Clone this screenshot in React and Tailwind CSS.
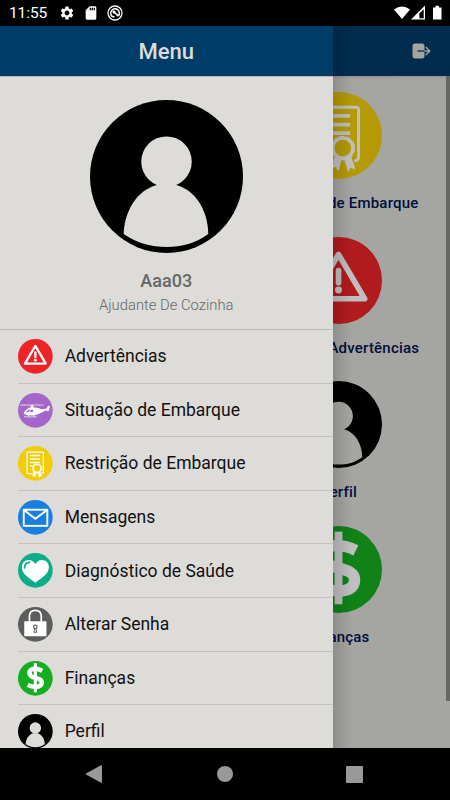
import { MdSettings, MdSdCard } from "react-icons/md";

function PersonIcon({ className }) {
  return (
    <svg viewBox="0 0 100 100" className={className}>
      <circle cx="50" cy="50" r="50" fill="#000" />
      <circle cx="50" cy="40.3" r="16.5" fill="#dddcd8" />
      <path d="M43.5 55.5H56.5C69 59 77 72 77.3 87.5C69 93.500 60 96 50 96S31 93.500 22 87.500C22.500 72 31 59 43.500 55.500Z" fill="#dddcd8" />
    </svg>
  );
}

function WarningIcon({ className }) {
  return (
    <svg viewBox="0 0 100 100" className={className}>
      <circle cx="50" cy="50" r="50" fill="#ec2427" />
      <path d="M50 20L80 71H20Z" fill="none" stroke="#fff" strokeWidth="6.500" strokeLinejoin="round" />
      <path d="M50 38.500V52.500" stroke="#fff" strokeWidth="6.500" strokeLinecap="round" />
      <circle cx="50" cy="61" r="4" fill="#fff" />
    </svg>
  );
}

function HelicopterIcon({ className }) {
  return (
    <svg viewBox="0 0 100 100" className={className}>
      <circle cx="50" cy="50" r="50" fill="#a566c9" />
      <path d="M6 34.800H74" stroke="#fff" strokeWidth="2" />
      <path d="M37 35H44V41L58 43L68 47L82 45L87 37H92L90 50L86 53L82 50L62 59C54 63 46 65 36 65C26 65 18 62 16 58C18 53 25 46 33 42L37 41Z" fill="#fff" />
      <path d="M23 55L31 47L34 48L31 55ZM36 48H43V55H34Z" fill="#a566c9" />
      <path d="M30 63V69M47 63V69M17 66L20 69H54" fill="none" stroke="#fff" strokeWidth="2" />
    </svg>
  );
}

function CertificateIcon({ className }) {
  return (
    <svg viewBox="0 0 100 100" className={className}>
      <circle cx="50" cy="50" r="50" fill="#f2cd07" />
      <path d="M41 79.500H29Q26 79.500 26 76.500V20.500Q26 17.500 29 17.500H70Q73 17.500 73 20.500V75Q73 78 69.500 79" fill="none" stroke="#fff" strokeWidth="3.400" strokeLinecap="round" />
      <path d="M34 27.500H63.500M34 37.500H63.500M34 47.300H63.500M34 57H41" stroke="#fff" strokeWidth="4.300" />
      <path d="M46 72L41 89L46.500 86L50 91L54 76ZM56 76L61 92L64 87L69.500 89L64 72Z" fill="#fff" />
      <circle cx="55" cy="64.500" r="11.500" fill="#f2cd07" stroke="#fff" strokeWidth="3.800" />
      <circle cx="55" cy="64.500" r="13.200" fill="none" stroke="#fff" strokeWidth="1.800" strokeDasharray="5 3.290" strokeLinecap="round" />
    </svg>
  );
}

function MailIcon({ className }) {
  return (
    <svg viewBox="0 0 100 100" className={className}>
      <circle cx="50" cy="50" r="50" fill="#187fe0" />
      <rect x="16.500" y="28" width="68" height="46.500" fill="none" stroke="#fff" strokeWidth="5.500" />
      <path d="M17 29L50 54L84 29" fill="none" stroke="#fff" strokeWidth="5.500" />
    </svg>
  );
}

function HeartIcon({ className }) {
  return (
    <svg viewBox="0 0 100 100" className={className}>
      <circle cx="50" cy="50" r="50" fill="#0cae87" />
      <path d="M50 86C40 76 11 63 11 41C11 28 20 20 31 20C40 20 46 25 50 32C54 25 60 20 69 20C80 20 89 28 89 41C89 63 60 76 50 86Z" fill="#fff" />
      <path d="M19 43C19 33 25 27 34 27" fill="none" stroke="#0cae87" strokeWidth="5" strokeLinecap="round" />
    </svg>
  );
}

function LockIcon({ className }) {
  return (
    <svg viewBox="0 0 100 100" className={className}>
      <circle cx="50" cy="50" r="50" fill="#5d5d5d" />
      <path d="M33 43V27C33 16 40 10 50 10S67 16 67 27V43" fill="none" stroke="#fff" strokeWidth="5" />
      <rect x="18" y="41" width="64" height="43" rx="2" fill="#fff" />
      <path d="M48 62L46 73H54L52 62Z" fill="none" stroke="#444" strokeWidth="2.500" />
      <circle cx="50" cy="57" r="5" fill="#fff" stroke="#444" strokeWidth="3" />
    </svg>
  );
}

function MoneyIcon({ className }) {
  return (
    <svg viewBox="0 0 100 100" className={className}>
      <circle cx="50" cy="50" r="50" fill="#16ae21" />
      <path d="M50 6.500V90" stroke="#fff" strokeWidth="9" />
      <path d="M70 28C62 24 56 22.500 48 22.500C37 22.500 33 29 33 35C33 43 41 46 50 48.500C60 51 68.500 53 68.500 62C68.500 71 61 74.500 50 74.500C42 74.500 35 72.500 28 69" fill="none" stroke="#fff" strokeWidth="13" />
    </svg>
  );
}

const menuItems = [
  { label: "Advertências", Icon: WarningIcon },
  { label: "Situação de Embarque", Icon: HelicopterIcon },
  { label: "Restrição de Embarque", Icon: CertificateIcon },
  { label: "Mensagens", Icon: MailIcon },
  { label: "Diagnóstico de Saúde", Icon: HeartIcon },
  { label: "Alterar Senha", Icon: LockIcon },
  { label: "Finanças", Icon: MoneyIcon },
  { label: "Perfil", Icon: PersonIcon },
];

const tiles = [
  { label: "Restrição de Embarque", Icon: CertificateIcon },
  { label: "Consultar Advertências", Icon: WarningIcon },
  { label: "Perfil", Icon: PersonIcon },
  { label: "Finanças", Icon: MoneyIcon },
];

function StatusBar() {
  return (
    <div className="flex h-[26px] shrink-0 items-center bg-black pl-[9px] pr-[7px] text-white">
      <span className="w-[50px] pt-0.5 text-[15.500px] leading-none tracking-[-0.1px]">11:55</span>
      <MdSettings className="size-4" />
      <MdSdCard className="ml-2 size-4" />
      <svg viewBox="0 0 16 16" className="ml-2 size-4" fill="none" stroke="currentColor">
        <circle cx="8" cy="8" r="7" strokeWidth="1.300" />
        <path d="M11.500 10.800A4.300 4.300 0 1 0 5 11.200L7.500 12M6.200 6.200L11.500 11.200" strokeWidth="1.600" />
        <circle cx="7" cy="7" r="1.500" fill="currentColor" stroke="none" />
      </svg>
      <svg viewBox="0 0 50 16" className="ml-auto h-4 w-[50px]" fill="currentColor">
        <path d="M1 4.500Q9 -1.500 17 4.500L9 14Z" />
        <path fillRule="evenodd" d="M32 .5V14.500H18ZM30.700 4.200L26.300 8.600V13.200H30.700Z" />
        <path d="M42.500 .8H46V2.500H48.500V14.500H40V2.500H42.500Z" />
      </svg>
    </div>
  );
}

function HomePage() {
  return (
    <div className="flex h-full flex-col">
      <header className="flex h-[50px] shrink-0 items-center justify-end bg-[#003c68] shadow-sm">
        <button className="flex h-[42px] w-14 items-center justify-center rounded pr-[3px] shadow">
          <svg viewBox="0 0 20 18" className="h-[18px] w-5">
            <rect x="1.500" y="1.500" width="12" height="15" rx="2.500" fill="#dddcd8" />
            <path d="M6.500 9H14" stroke="#003c68" strokeWidth="1.300" />
            <path d="M13.500 9H18.500M14.800 5L18.800 9L14.800 13" fill="none" stroke="#dddcd8" strokeWidth="1.300" />
          </svg>
        </button>
      </header>
      <main className="flex min-h-0 flex-1">
        <div className="ml-auto mr-[3.500px] flex w-[208px] flex-col items-center pt-4">
          {tiles.map(({ label, Icon }) => (
            <div key={label} className="flex h-[144.500px] shrink-0 flex-col items-center">
              <Icon className="size-[87px] overflow-visible" />
              <span className="mt-[14px] text-[15px] font-medium leading-5 tracking-[0.2px] text-[#001455]">
                {label}
              </span>
            </div>
          ))}
        </div>
        <div className="h-[625px] w-1 bg-[#888887]" />
      </main>
    </div>
  );
}

function Drawer() {
  return (
    <aside className="absolute inset-y-0 left-0 flex w-[332.500px] flex-col overflow-hidden bg-[#dddcd8]">
      <div className="flex h-[50px] shrink-0 items-center justify-center bg-[#003c68] text-[22px] font-medium text-[#dddcd8]">
        Menu
      </div>
      <div className="flex h-[253.500px] shrink-0 flex-col items-center border-b border-[#bcbbb8] border-t border-t-[#b8b6b7] pt-[22.500px]">
        <PersonIcon className="size-[153px] overflow-visible" />
        <h2 className="mt-4 text-lg font-medium leading-6 text-[#666768]">Aaa03</h2>
        <p className="mt-0.5 text-[14.800px] font-light leading-5 text-[#666768]">Ajudante De Cozinha</p>
      </div>
      <ul className="pt-[0.5px]">
        {menuItems.map(({ label, Icon }) => (
          <li key={label} className="flex h-[53.600px] pl-[17.500px]">
            <div className="flex flex-1 items-center border-b border-[#c3c2bf]">
              <Icon className="size-[34.700px] shrink-0 overflow-visible" />
              <span className="ml-[12.500px] text-[17.500px] text-[#111]">{label}</span>
            </div>
          </li>
        ))}
      </ul>
    </aside>
  );
}

function NavigationBar() {
  return (
    <div className="flex h-[52px] shrink-0 items-center justify-between bg-black pl-[85px] pr-[87px]">
      <svg viewBox="0 0 18 20" className="h-5 w-[18px]" fill="#999">
        <path d="M1 9.500Q.3 10 1 10.500L16 18.800Q17 19 17 18V2Q17 1 16 1.200Z" />
      </svg>
      <div className="size-4 rounded-full bg-[#999]" />
      <div className="size-[17px] rounded-[1px] bg-[#999]" />
    </div>
  );
}

export default function App() {
  return (
    <div className="flex h-screen flex-col overflow-hidden bg-[#dddcd8] font-['Roboto',sans-serif]">
      <StatusBar />
      <div className="relative h-[722px] overflow-hidden">
        <HomePage />
        <div className="absolute inset-0 bg-black/25" />
        <div className="absolute inset-y-0 left-[332px] w-5 bg-linear-to-r from-black/15 to-transparent" />
        <Drawer />
      </div>
      <NavigationBar />
    </div>
  );
}
